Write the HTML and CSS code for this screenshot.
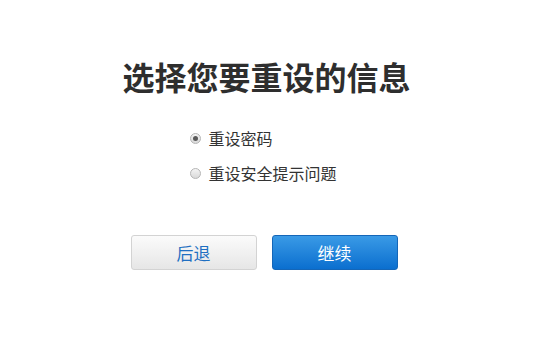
FILE: index.html
```html
<!DOCTYPE html>
<html lang="zh-CN">
<head>
<meta charset="utf-8">
<title>选择您要重设的信息</title>
<link rel="stylesheet" href="styles.css">
</head>
<body>
<main class="page">
  <h1 class="title">选择您要重设的信息</h1>
  <form class="form">
    <ul class="options">
      <li class="option">
        <span class="radio checked"></span>
        <span class="label">重设密码</span>
      </li>
      <li class="option">
        <span class="radio"></span>
        <span class="label">重设安全提示问题</span>
      </li>
    </ul>
    <div class="actions">
      <button type="button" class="btn btn-back">后退</button>
      <button type="button" class="btn btn-continue">继续</button>
    </div>
  </form>
</main>
</body>
</html>
```

FILE: styles.css
```css
* { box-sizing: border-box; }
html, body {
  margin: 0;
  padding: 0;
  background: #ffffff;
}
body {
  font-family: "Noto Sans CJK SC", "Noto Sans", sans-serif;
  color: #333333;
  width: 533px;
  height: 362px;
  overflow: hidden;
}
.page {
  display: flex;
  flex-direction: column;
  align-items: center;
  padding-top: 56px;
}
.title {
  margin: 0;
  font-size: 32px;
  line-height: 40px;
  font-weight: 700;
  color: #2e2e2e;
  letter-spacing: 0;
}
.form {
  width: 268px;
  margin: 0;
  padding: 0;
}
.options {
  list-style: none;
  margin: 30px 0 0 0;
  padding: 0 0 0 57px;
  display: flex;
  flex-direction: column;
  gap: 11px;
}
.option {
  display: flex;
  align-items: center;
  height: 24px;
  gap: 8px;
}
.radio {
  width: 11px;
  height: 11px;
  border-radius: 50%;
  border: 1px solid #b5b5b5;
  background: linear-gradient(#f4f4f4, #d9d9d9);
  display: flex;
  align-items: center;
  justify-content: center;
  flex: none;
}
.radio.checked::after {
  content: "";
  width: 5px;
  height: 5px;
  border-radius: 50%;
  background: #5a5a5a;
}
.label {
  font-size: 16px;
  line-height: 24px;
  color: #333333;
}
.actions {
  display: flex;
  gap: 15px;
  margin-top: 50px;
  margin-left: -2px;
}
.btn {
  width: 126px;
  height: 35px;
  border-radius: 3px;
  font-family: inherit;
  font-size: 17px;
  line-height: 33px;
  padding: 0;
  cursor: pointer;
}
.btn-back {
  border: 1px solid #d3d3d3;
  background: linear-gradient(#fbfbfb, #e6e6e6);
  color: #1f6fc2;
}
.btn-continue {
  border: 1px solid #1466b8;
  background: linear-gradient(#3a9ae6, #0b6fcf);
  color: #ffffff;
}
```
